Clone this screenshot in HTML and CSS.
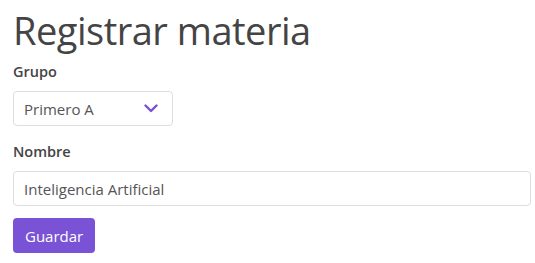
FILE: index.html
```html
<!DOCTYPE html>
<html lang="es">
<head>
<meta charset="utf-8">
<link rel="stylesheet" href="styles.css">
</head>
<body>
<main class="page">
  <h1 class="title">Registrar materia</h1>
  <form class="form">
    <div class="field">
      <label class="label" for="grupo">Grupo</label>
      <div class="select">
        <span class="select-value">Primero A</span>
        <svg class="chevron" width="14" height="9" viewBox="0 0 14 9"><path d="M1.5 1.5 L7 7 L12.5 1.5" fill="none" stroke="#7a4fd6" stroke-width="2.4" stroke-linecap="round" stroke-linejoin="round"/></svg>
      </div>
    </div>
    <div class="field">
      <label class="label" for="nombre">Nombre</label>
      <div class="input" id="nombre">Inteligencia Artificial</div>
    </div>
    <div class="actions">
      <button class="btn" type="button">Guardar</button>
    </div>
  </form>
</main>
</body>
</html>
```
FILE: styles.css
```css
* { box-sizing: border-box; }
html, body { margin: 0; background: #fff; }
body {
  font-family: "Open Sans", "Noto Sans", sans-serif;
  color: #444;
}
.page { padding: 6px 4px 0 13px; }
.title {
  margin: 0;
  font-size: 38px;
  font-weight: 400;
  line-height: 48px;
  color: #444;
  letter-spacing: -0.5px;
}
.form { display: flex; flex-direction: column; }
.field { display: flex; flex-direction: column; }
.label {
  font-size: 14.5px;
  font-weight: 600;
  line-height: 20px;
  margin: 8px 0 9px;
  color: #444;
}
.field + .field .label { margin-top: 16px; }
.select {
  width: 160px;
  height: 35px;
  border: 1px solid #ddd;
  border-radius: 4px;
  display: flex;
  align-items: center;
  justify-content: space-between;
  padding: 0 14px 0 10px;
  font-size: 15px;
  color: #555;
}
.chevron { display: block; }
.input {
  height: 35px;
  border: 1px solid #ddd;
  border-radius: 4px;
  display: flex;
  align-items: center;
  padding: 0 10px;
  font-size: 15px;
  color: #555;
}
.actions { margin-top: 12px; }
.btn {
  font-family: inherit;
  font-size: 15px;
  color: #fff;
  background: #7a52d6;
  border: 0;
  border-radius: 4px;
  height: 35px;
  padding: 0 12px;
  cursor: pointer;
}
```
